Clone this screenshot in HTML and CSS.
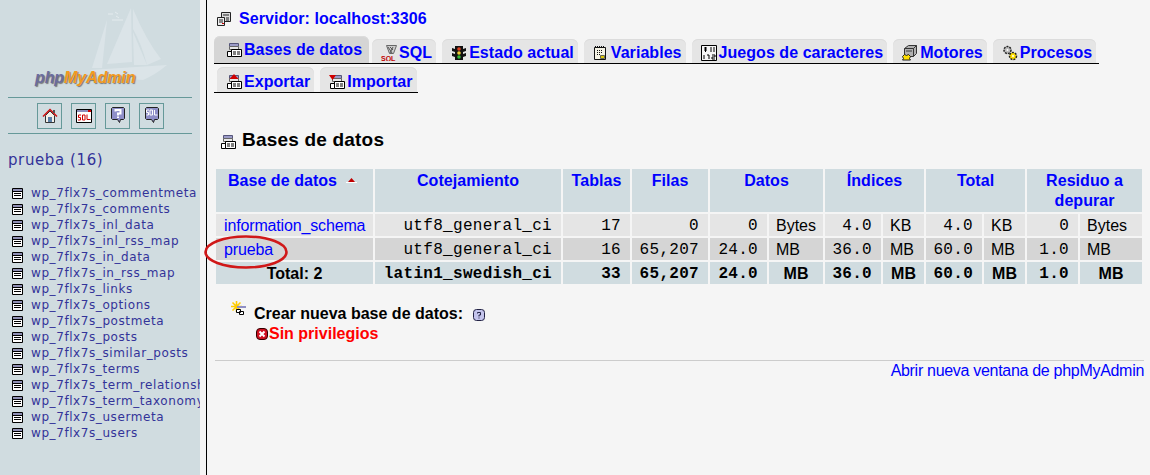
FILE: index.html
```html
<!DOCTYPE html>
<html lang="es">
<head>
<meta charset="utf-8">
<title>phpMyAdmin</title>
<link rel="stylesheet" href="styles.css">
</head>
<body>
<svg class="defs" width="0" height="0" aria-hidden="true">
  <symbol id="i-db" viewBox="0 0 16 16">
    <path fill="#9c9cc8" stroke="#55557a" d="M3.500 1.500h9v3h-9z"/>
    <path fill="#e8e8e8" stroke="#666" d="M3.500 4.500h9v3h-9z"/>
    <path fill="#fff" stroke="#000" d="M1.500 9.500h4v5h-4z"/>
    <path fill="#fff" stroke="#000" d="M5.500 7.500h10v7h-10z"/>
    <path stroke="#000" d="M7 10h3M11 10h3M7 12h3M11 12h3"/>
  </symbol>
  <symbol id="i-table" viewBox="0 0 11 11">
    <path fill="#fff" stroke="#000" d="M.5.5h10v10H.5z"/>
    <path fill="#8f8fb4" d="M1 1h9v2H1z"/>
    <path stroke="#000" d="M1 3.500h9M2 5.500h7M2 7.500h7"/>
  </symbol>
</svg>
<div class="page">
  <aside class="side">
    <div class="logo">
      <svg class="ship" width="145" height="90" viewBox="0 0 145 90" aria-hidden="true">
        <g fill="#dbe4e8">
          <path d="M101 3 L77 59 L102 57 Z"/>
          <path d="M77 15 L62 63 L72 63 Z"/>
          <path d="M103 4 Q116 35 131 54 L117 60 Q112 40 103 24 Z"/>
          <path d="M103 27 L117 60 L104 60 Z"/>
          <path d="M60 65 L137 60 Q125 70 113 75 L70 72 Z"/>
        </g>
        <path stroke="#e4ebee" fill="none" d="M78 9h5M85 7l3 2M82 15h11M86 11l3 2"/>
      </svg>
      <div class="logo-text"><span class="php">php</span><span class="my">MyAdmin</span></div>
    </div>
    <div class="icons">
      <a class="ibox">
        <svg width="16" height="16" viewBox="0 0 16 16"><path fill="#f4f0e8" stroke="#333" d="M3.500 7.500v7h9v-7L8 3z"/><path fill="#5a7fa8" d="M6 9h4v5H6z"/><path fill="none" stroke="#d01010" stroke-width="1.500" d="M1 8.500 8 1.500l7 7"/><path fill="#555" d="M11 2h2v3h-2z"/></svg>
      </a>
      <a class="ibox">
        <svg width="16" height="16" viewBox="0 0 16 16"><path fill="#fff" stroke="#000" d="M.5 1.500h15v13H.5z"/><path fill="#8d8dbb" d="M1 2h14v2H1z"/><path fill="#d00000" d="M12 2h3v2h-3z"/><path fill="none" stroke="#d00000" d="M5 7H2.500v2.500h2V12H2M6.500 7h2.500v5H6.500zM11 6.500V11.500h3.500"/></svg>
      </a>
      <a class="ibox">
        <svg width="14" height="17" viewBox="0 0 14 17"><path fill="#8f8fc8" stroke="#222" d="M1.500.5h11l1 1v10l-1 1H9.500l-1 3-2-3h-5l-1-1v-10z"/><path fill="none" stroke="#fff" stroke-width="2" d="M4.500 4.500V3h5V6.500H7V8.500M7 9.500v1.500"/></svg>
      </a>
      <a class="ibox">
        <svg width="14" height="17" viewBox="0 0 14 17"><path fill="#8f8fc8" stroke="#222" d="M1.500.5h11l1 1v10l-1 1H9.500l-1 3-2-3h-5l-1-1v-10z"/><path fill="none" stroke="#fff" d="M4 3H1.500v2.500h2V8H1.500M5 3h2.500v5H5zM9.500 3v5H12.500"/></svg>
      </a>
    </div>
    <h2 class="dbname">prueba (16)</h2>
    <ul class="tables">
      <li><svg class="ti"><use href="#i-table"/></svg><a>wp_7flx7s_commentmeta</a></li>
      <li><svg class="ti"><use href="#i-table"/></svg><a>wp_7flx7s_comments</a></li>
      <li><svg class="ti"><use href="#i-table"/></svg><a>wp_7flx7s_inl_data</a></li>
      <li><svg class="ti"><use href="#i-table"/></svg><a>wp_7flx7s_inl_rss_map</a></li>
      <li><svg class="ti"><use href="#i-table"/></svg><a>wp_7flx7s_in_data</a></li>
      <li><svg class="ti"><use href="#i-table"/></svg><a>wp_7flx7s_in_rss_map</a></li>
      <li><svg class="ti"><use href="#i-table"/></svg><a>wp_7flx7s_links</a></li>
      <li><svg class="ti"><use href="#i-table"/></svg><a>wp_7flx7s_options</a></li>
      <li><svg class="ti"><use href="#i-table"/></svg><a>wp_7flx7s_postmeta</a></li>
      <li><svg class="ti"><use href="#i-table"/></svg><a>wp_7flx7s_posts</a></li>
      <li><svg class="ti"><use href="#i-table"/></svg><a>wp_7flx7s_similar_posts</a></li>
      <li><svg class="ti"><use href="#i-table"/></svg><a>wp_7flx7s_terms</a></li>
      <li><svg class="ti"><use href="#i-table"/></svg><a>wp_7flx7s_term_relationships</a></li>
      <li><svg class="ti"><use href="#i-table"/></svg><a>wp_7flx7s_term_taxonomy</a></li>
      <li><svg class="ti"><use href="#i-table"/></svg><a>wp_7flx7s_usermeta</a></li>
      <li><svg class="ti"><use href="#i-table"/></svg><a>wp_7flx7s_users</a></li>
    </ul>
  </aside>

  <main class="main">
    <div class="server">
      <svg width="16" height="16" viewBox="0 0 16 16"><path fill="#ddd" stroke="#222" d="M5.500 1.500h9v9h-9z"/><path fill="#eee" stroke="#222" d="M1.500 6.500h7v8h-7z"/><path stroke="#222" d="M7 4h6M10 7h3M10 9h3M3 9h4M3 11h4"/><path fill="#c00" d="M6 12h2v1H6z"/></svg>
      <a>Servidor: localhost:3306</a>
    </div>

    <nav class="tabrow row-one">
      <a class="tab active"><svg class="tabicon"><use href="#i-db"/></svg>Bases de datos</a>
      <a class="tab"><svg class="tabicon" viewBox="0 0 16 16"><path fill="#ccc" stroke="#666" d="M5.500 .5h10l-3 8h-4z"/><path stroke="#555" d="M7 2l4 6M12 2l-3 6M9 2l3 3"/><text x="0" y="15.500" class="sqltxt">SQL</text></svg>SQL</a>
      <a class="tab"><svg class="tabicon" viewBox="0 0 16 16"><path fill="#111" d="M4 1h8v14H4zM1 3l3 1v3L1 6zM15 3l-3 1v3l3-1zM1 8l3 1v3L1 11zM15 8l-3 1v3l3-1z"/><circle cx="8" cy="4" r="1.800" fill="#d42"/><circle cx="8" cy="8" r="1.800" fill="#ec3"/><circle cx="8" cy="12" r="1.800" fill="#3b3"/></svg>Estado actual</a>
      <a class="tab"><svg class="tabicon" viewBox="0 0 16 16"><path fill="#f4f2e4" stroke="#111" d="M1.500 2.500h11v12h-11z"/><path stroke="#111" stroke-dasharray="1 1" d="M2 1.500h10M4 5.500h6M4 7.500h6M4 9.500h3"/><path fill="#dcc800" stroke="#665" d="M7.500 10.500h4v3h-4z"/></svg>Variables</a>
      <a class="tab"><svg class="tabicon" viewBox="0 0 16 16"><path fill="#f6f6f6" stroke="#000" d="M.5.500h15v15H.5z"/><path fill="none" stroke="#000" d="M3 3h3M3 5h3M4.500 2v5M10 2v5M13 2v5M3 10v4M6 10h2v4M11 10h3v2h-3v2h3"/></svg>Juegos de caracteres</a>
      <a class="tab"><svg class="tabicon" viewBox="0 0 16 16"><path fill="#b0b0b0" stroke="#333" d="M2.500 3.500l4-3h8v8l-3 3h-9z"/><path stroke="#333" fill="none" d="M2.500 3.500h9v8M11.500 3.500l3-3"/><path fill="#777" d="M4 5h6v2H4z"/><path fill="#ffdf00" stroke="#222" d="M.5 11.500l2-2 2 1 2-1 2 2-1 2 1 1.500h-8l1-1.500z"/></svg>Motores</a>
      <a class="tab"><svg class="tabicon" viewBox="0 0 16 16"><circle cx="5.500" cy="5" r="3.500" fill="#bbb" stroke="#222" stroke-width="1.500" stroke-dasharray="2 1"/><circle cx="5.500" cy="5" r="1" fill="#fff"/><circle cx="11" cy="11" r="3.500" fill="#ffdf00" stroke="#222" stroke-width="1.500" stroke-dasharray="2 1"/><circle cx="11" cy="11" r="1" fill="#fff"/></svg>Procesos</a>
    </nav>
    <nav class="tabrow row-two">
      <a class="tab"><svg class="tabicon" viewBox="0 0 16 16"><use href="#i-db"/><path fill="#d00000" d="M8 0 12.500 5H3.500z"/></svg>Exportar</a>
      <a class="tab"><svg class="tabicon" viewBox="0 0 16 16"><use href="#i-db"/><path fill="#d00000" d="M0 1h7L3.500 6z"/></svg>Importar</a>
    </nav>

    <h1 class="title"><svg class="tabicon"><use href="#i-db"/></svg>Bases de datos</h1>

    <table class="dbs">
      <colgroup>
        <col class="c157"><col class="c186"><col class="c67"><col class="c76">
        <col class="c57"><col class="c54"><col class="c56"><col class="c41">
        <col class="c56"><col class="c41"><col class="c51"><col class="c62">
      </colgroup>
      <thead>
        <tr>
          <th class="first"><a>Base de datos</a><svg class="sort" width="11" height="6" viewBox="0 0 11 6"><path fill="#c00000" d="M5.500 0 9 4H2z"/><path fill="#fff" d="M0 4h11v1H0z"/></svg></th>
          <th><a>Cotejamiento</a></th>
          <th><a>Tablas</a></th>
          <th><a>Filas</a></th>
          <th colspan="2"><a>Datos</a></th>
          <th colspan="2"><a>Índices</a></th>
          <th colspan="2"><a>Total</a></th>
          <th colspan="2"><a>Residuo a depurar</a></th>
        </tr>
      </thead>
      <tbody>
        <tr class="odd">
          <td class="name"><a>information_schema</a></td>
          <td class="num">utf8_general_ci</td><td class="num">17</td><td class="num">0</td>
          <td class="num">0</td><td class="unit">Bytes</td>
          <td class="num">4.0</td><td class="unit">KB</td>
          <td class="num">4.0</td><td class="unit">KB</td>
          <td class="num">0</td><td class="unit">Bytes</td>
        </tr>
        <tr class="even">
          <td class="name"><a>prueba</a></td>
          <td class="num">utf8_general_ci</td><td class="num">16</td><td class="num">65,207</td>
          <td class="num">24.0</td><td class="unit">MB</td>
          <td class="num">36.0</td><td class="unit">MB</td>
          <td class="num">60.0</td><td class="unit">MB</td>
          <td class="num">1.0</td><td class="unit">MB</td>
        </tr>
        <tr class="sum">
          <th>Total: 2</th>
          <td class="num">latin1_swedish_ci</td><td class="num">33</td><td class="num">65,207</td>
          <td class="num">24.0</td><th>MB</th>
          <td class="num">36.0</td><th>MB</th>
          <td class="num">60.0</td><th>MB</th>
          <td class="num">1.0</td><th>MB</th>
        </tr>
      </tbody>
    </table>

    <div class="create">
      <svg class="star" width="15" height="15" viewBox="0 0 15 15"><path stroke="#fc0" stroke-width="1.600" d="M5.500 0v11M0 5.500h11M1.500 1.500l8 8M9.500 1.500l-8 8"/><path fill="#8f8fc4" d="M6 5h9v2H6z"/><path fill="#fff" stroke="#000" d="M5.500 8.500h4v3h-4zM8.500 10.500h4v3h-4z"/></svg>
      <div class="create-body">
        <div class="create-label">Crear nueva base de datos:<svg class="help" width="12" height="12" viewBox="0 0 12 12"><rect x=".5" y=".5" width="11" height="11" rx="3" fill="#c4c4ec" stroke="#224"/><path fill="none" stroke="#224" d="M4.500 4.500V3.500h3v2.500H6v1.500M6 8.500v1"/></svg></div>
        <div class="noperm"><svg width="12" height="12" viewBox="0 0 12 12"><rect x=".5" y=".5" width="11" height="11" rx="3.500" fill="#d01020" stroke="#300"/><path stroke="#fff" stroke-width="2" d="M3.500 3.500l5 5M8.500 3.500l-5 5"/></svg>Sin privilegios</div>
      </div>
    </div>

    <div class="foot"><a>Abrir nueva ventana de phpMyAdmin</a></div>

    <svg class="circle" width="86" height="38" viewBox="0 0 86 38" aria-hidden="true"><ellipse cx="42" cy="19" rx="40.500" ry="15.500" fill="none" stroke="#d01818" stroke-width="2.600"/></svg>
  </main>
</div>
</body>
</html>
```

FILE: styles.css
```css
* { box-sizing: border-box; }
html, body { margin: 0; height: 100%; }
body { background: #f5f5f5; font-family: "Liberation Sans", Arial, sans-serif; color: #000; overflow: hidden; }
.defs { position: absolute; }
a { color: #0000ff; }

.page { display: flex; height: 475px; }

/* sidebar */
.side { width: 200px; flex: none; background: #d0dce0; overflow: hidden; margin-right: 6px; }
.logo { position: relative; height: 98px; border-bottom: 1px solid #669999; margin: 0 8px; }
.ship { position: absolute; left: 22px; top: 5px; }
.logo-text { position: absolute; left: 27px; top: 69px; font: italic bold 16px/18px "Liberation Sans", sans-serif; letter-spacing: -.1px; text-shadow: 1px 1px 1px #777; white-space: nowrap; }
.php { color: #6a6c9e; }
.my { color: #f29a1e; }
.icons { display: flex; justify-content: center; align-items: center; gap: 9px; margin: 0 8px; height: 36px; border-bottom: 1px solid #669999; padding-left: 1px; }
.ibox { width: 25px; height: 26px; border: 1px solid #669999; display: flex; align-items: center; justify-content: center; }
.dbname { margin: 16px 0 0 8px; font: 400 15px/20px "DejaVu Sans", sans-serif; letter-spacing: .6px; color: #333399; height: 20px; }
.tables { list-style: none; margin: 15px 0 0; padding: 0; }
.tables li { display: flex; align-items: center; height: 16px; padding-left: 12px; gap: 8px; white-space: nowrap; font: 12px/16px "DejaVu Sans", sans-serif; }
.tables a { color: #333399; letter-spacing: .58px; }
.ti { width: 11px; height: 11px; flex: none; }

/* main */
.main { position: relative; flex: 1; min-width: 0; border-left: 1px solid #000; padding: 9px 6px 0 7px; }
.server { display: flex; align-items: center; gap: 7px; height: 20px; margin: 0 0 7px 2px; font: bold 16px/20px "Liberation Sans", sans-serif; letter-spacing: .08px; }
.tabrow { display: flex; align-items: flex-end; border-bottom: 1px solid #000; font: bold 16px/20px "Liberation Sans", sans-serif; letter-spacing: .05px; }
.row-one { width: 885px; height: 28px; gap: 6px; }
.row-two { width: 204px; height: 26px; margin-top: 3px; padding-left: 3px; gap: 6px; }
.tab { display: flex; align-items: center; height: 24px; padding: 4px 4px 0 9px; background: #e5e5e5; border-radius: 6px 6px 0 0; box-shadow: inset 0 1px 0 #dcdcdc; color: #0000ff; white-space: nowrap; }
.row-two .tab { height: 25px; }
.tab.active { height: 27px; padding: 2px 7px 1px 12px; margin-right: -3px; background: #d5d5d5; }
.tabicon { width: 16px; height: 16px; flex: none; margin-right: 2px; }
.sqltxt { font: bold 7px "Liberation Sans", sans-serif; fill: #c00000; letter-spacing: 0; }

.title { display: flex; align-items: center; gap: 4px; margin: 35px 0 0 6px; font: bold 19px/24px "Liberation Sans", sans-serif; letter-spacing: .2px; height: 24px; }
.title .tabicon { margin: 3px 2px 0 0; }

.dbs { table-layout: fixed; width: 930px; border-collapse: separate; border-spacing: 2px; margin-top: 15px; font: 16px/20px "Liberation Sans", sans-serif; }
.c157 { width: 157px; } .c186 { width: 186px; } .c67 { width: 67px; } .c76 { width: 76px; }
.c57 { width: 57px; } .c54 { width: 54px; } .c56 { width: 56px; } .c41 { width: 41px; }
.c51 { width: 51px; } .c62 { width: 62px; }
.dbs th, .dbs td { padding: 0; }
.dbs thead th { background: #d0dce0; height: 43px; vertical-align: top; padding: 2px 4px 0; font-weight: bold; letter-spacing: .05px; }
.dbs thead th.first { padding-right: 8px; }
.sort { margin-left: 9px; vertical-align: 2px; }
.dbs tbody td, .dbs tbody th { height: 22px; vertical-align: middle; padding-top: 1px; }
.odd td { background: #e5e5e5; }
.even td { background: #d5d5d5; }
.sum td, .sum th { background: #d0dce0; }
.sum td, .sum th { height: 23px; }
.name { padding-left: 8px !important; white-space: nowrap; overflow: visible; letter-spacing: -.15px; }
.num { text-align: right; padding-right: 9px !important; font-family: "Liberation Mono", monospace; letter-spacing: .3px; white-space: nowrap; }
.sum .num { font-weight: bold; }
.unit { padding-left: 7px !important; }

.create { display: flex; margin: 15px 0 0 17px; gap: 8px; }
.star { flex: none; }
.create-body { padding-top: 3px; }
.create-label { display: flex; align-items: center; font: bold 16px/20px "Liberation Sans", sans-serif; height: 20px; }
.help { margin-left: 10px; margin-top: 2px; }
.noperm { display: flex; align-items: center; margin: 0 0 0 2px; font: bold 16px/20px "Liberation Sans", sans-serif; color: #ff0000; gap: 1px; }
.foot { margin-top: 16px; border-top: 1px solid #cccccc; text-align: right; font: 16px/19px "Liberation Sans", sans-serif; letter-spacing: -.3px; width: 929px; margin-left: 1px; }

.circle { position: absolute; left: -3px; top: 233px; }
```
